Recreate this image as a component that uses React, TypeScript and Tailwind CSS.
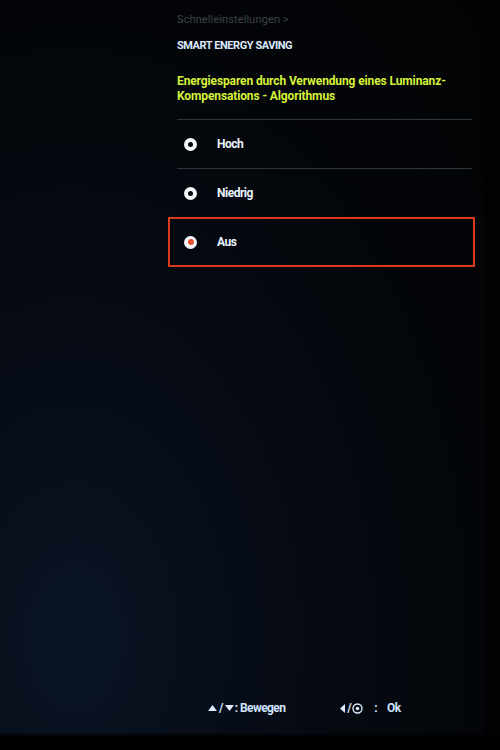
import React from "react";

function Radio({ selected }: { selected?: boolean }) {
  return (
    <div className="w-[13px] h-[13px] rounded-full bg-[#f4f8fc] flex items-center justify-center">
      <div className={selected ? "w-[6px] h-[6px] rounded-full bg-[#e8502c]" : "w-[5px] h-[5px] rounded-full bg-[#05070a]"} />
    </div>
  );
}

function Row({ label, selected }: { label: string; selected?: boolean }) {
  return (
    <div
      className={
        selected
          ? "h-[50px] flex items-center border-2 border-[#d9391c]"
          : "h-[48px] flex items-center"
      }
    >
      <div className={selected ? "ml-[14px]" : "ml-[16px]"}>
        <Radio selected={selected} />
      </div>
      <span className="ml-[20px] text-[12px] leading-[14px] font-bold text-[#eaf4ff] tracking-[-0.04em]">
        {label}
      </span>
    </div>
  );
}

export default function App() {
  return (
    <div
      className="w-[500px] h-[750px] flex flex-col overflow-hidden bg-[linear-gradient(to_bottom,transparent_97.6%,#010102_98.2%),linear-gradient(to_right,transparent_96.5%,#020203_97.5%),radial-gradient(ellipse_at_15%_85%,#0a1424_0%,#060b14_35%,#030508_70%,#020304_100%)]"
      style={{ fontFamily: "Roboto, 'Liberation Sans', sans-serif" }}
    >
      <div className="ml-[168px] w-[307px] pt-[13px] flex flex-col">
        <div className="pl-[9px] text-[11px] leading-[14px] text-[#3b4249] tracking-[0.01em]">
          Schnelleinstellungen &gt;
        </div>
        <div className="pl-[9px] mt-[12px] text-[11px] leading-[14px] font-bold text-[#dcebff] tracking-[-0.04em]">
          SMART ENERGY SAVING
        </div>
        <div className="pl-[9px] mt-[21px] text-[12px] leading-[15px] font-bold text-[#d6f23a] tracking-[-0.01em]">
          <div>Energiesparen durch Verwendung eines Luminanz-</div>
          <div>Kompensations - Algorithmus</div>
        </div>
        <div className="mt-[15px] ml-[9px] mr-[3px] h-px bg-[#2e353b]" />
        <Row label="Hoch" />
        <div className="ml-[9px] mr-[3px] h-px bg-[#2e353b]" />
        <Row label="Niedrig" />
        <Row label="Aus" selected />
      </div>

      <div className="mt-auto pb-[35px] flex items-center text-[12px] leading-[14px] font-bold text-[#cfe4ff] tracking-[-0.05em]">
        <div className="ml-[208px] flex items-center">
          <svg width="9" height="6" viewBox="0 0 9 6" className="mr-[2px]">
            <polygon points="4.5,0 9,6 0,6" fill="#dbeaff" />
          </svg>
          <span>/</span>
          <svg width="9" height="6" viewBox="0 0 9 6" className="ml-[2px] mr-[1px]">
            <polygon points="0,0 9,0 4.5,6" fill="#dbeaff" />
          </svg>
          <span>: Bewegen</span>
        </div>
        <div className="ml-[55px] flex items-center">
          <svg width="5" height="9" viewBox="0 0 5 9" className="mr-[2px]">
            <polygon points="5,0 5,9 0,4.5" fill="#dbeaff" />
          </svg>
          <span>/</span>
          <svg width="11" height="11" viewBox="0 0 11 11" className="ml-[1px]">
            <circle cx="5.5" cy="5.5" r="4.5" fill="none" stroke="#dbeaff" strokeWidth="1.4" />
            <circle cx="5.5" cy="5.5" r="1.8" fill="#dbeaff" />
          </svg>
          <span className="ml-[11px]">:</span>
          <span className="ml-[10px]">Ok</span>
        </div>
      </div>
    </div>
  );
}
